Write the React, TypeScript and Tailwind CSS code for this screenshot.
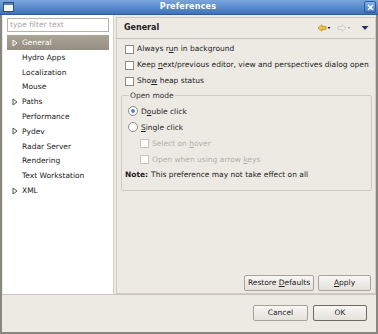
import React from "react";

const font = { fontFamily: '"DejaVu Sans", "Liberation Sans", sans-serif' };

function Tri({ color = "#555" }: { color?: string }) {
  return (
    <svg width="6" height="8" viewBox="0 0 6 8">
      <path d="M1 1 L5 4 L1 7 Z" fill="none" stroke={color} strokeWidth="1" />
    </svg>
  );
}

function Check({ disabled = false }: { disabled?: boolean }) {
  return (
    <span
      className={
        "inline-block w-[9px] h-[9px] border bg-white shrink-0 " +
        (disabled ? "border-[#c9c5bd] bg-[#f4f2ee]" : "border-[#8d8a83]")
      }
    />
  );
}

function Radio({ on = false }: { on?: boolean }) {
  return (
    <span className="relative inline-block w-[10px] h-[10px] rounded-full border border-[#8d8a83] bg-white shrink-0">
      {on && (
        <span className="absolute left-[2px] top-[2px] w-[4px] h-[4px] rounded-full bg-[#5b86c4]" />
      )}
    </span>
  );
}

function Btn({
  children,
  w,
  def = false,
}: {
  children: React.ReactNode;
  w: string;
  def?: boolean;
}) {
  return (
    <div
      className={
        "h-[16px] flex items-center justify-center rounded-[2px] bg-gradient-to-b from-[#f8f7f5] to-[#e4e1db] text-[#222] " +
        (def ? "border border-[#6f6b64] " : "border border-[#a7a39b] ") +
        w
      }
    >
      {children}
    </div>
  );
}

export default function App() {
  const items: [string, boolean][] = [
    ["Hydro Apps", false],
    ["Localization", false],
    ["Mouse", false],
    ["Paths", true],
    ["Performance", false],
    ["Pydev", true],
    ["Radar Server", false],
    ["Rendering", false],
    ["Text Workstation", false],
    ["XML", true],
  ];
  return (
    <div
      className="w-[378px] h-[334px] bg-[#edeae4] text-[7.5px] text-[#222] flex flex-col overflow-hidden"
      style={font}
    >
      {/* title bar */}
      <div className="h-[15px] shrink-0 bg-gradient-to-b from-[#7aa6de] to-[#3e72ba] border-b border-[#2d5a99] flex items-center px-[2px] relative">
        <svg width="11" height="10" viewBox="0 0 11 10" className="ml-[1px]">
          <rect x="0.5" y="0.5" width="10" height="9" fill="#f4f4f4" stroke="#2f4f7a" />
          <rect x="1" y="1" width="9" height="2" fill="#5a7fb3" />
        </svg>
        <div className="flex-1 text-center text-white font-bold text-[8px] tracking-[0.2px] pr-[2px]">
          Preferences
        </div>
        <div className="w-[12px] h-[12px] rounded-[2px] bg-gradient-to-b from-[#8db4e8] to-[#3f74bd] border border-[#2c5a9a] flex items-center justify-center">
          <svg width="7" height="7" viewBox="0 0 7 7">
            <path d="M1 1 L6 6 M6 1 L1 6" stroke="white" strokeWidth="1.6" />
          </svg>
        </div>
      </div>

      <div className="flex-1 flex border-l-2 border-r-2 border-b-2 border-[#8a8780] flex-col">
        <div className="flex h-[280px] border-b border-[#c9c5bd]">
          {/* left */}
          <div className="w-[111px] ml-[1px] bg-white flex flex-col pt-[3px] border-r border-[#d4d0c8]">
            <div className="mx-[4px] h-[14px] border border-[#b6b2aa] flex items-center px-[2px] text-[#a9a69f]">
              type filter text
            </div>
            <div className="mt-[3px] mx-[4px] h-[15px] bg-gradient-to-b from-[#aaa597] to-[#938e80] flex items-center text-white">
              <span className="w-[15px] flex justify-center">
                <Tri color="#fff" />
              </span>
              General
            </div>
            {items.map(([n, t]) => (
              <div key={n} className="mx-[4px] h-[14.8px] flex items-center">
                <span className="w-[15px] flex justify-center">{t && <Tri />}</span>
                {n}
              </div>
            ))}
          </div>
          {/* right */}
          <div className="flex-1 ml-[2px] mt-[2px] border border-[#d0ccc4] flex flex-col">
            <div className="h-[21px] flex items-center pl-[7px] pr-[4px] border-b border-[#c6c2ba]">
              <span className="font-bold text-[8px] flex-1">General</span>
              <svg width="14" height="8" viewBox="0 0 14 8">
                <path d="M1 4 L5 0.8 L5 2.6 L9 2.6 L9 5.4 L5 5.4 L5 7.2 Z" fill="#f2c84b" stroke="#b98a1a" strokeWidth="0.8" />
                <path d="M10.5 3 L13.5 3 L12 5 Z" fill="#222" />
              </svg>
              <svg width="14" height="8" viewBox="0 0 14 8" className="ml-[6px]">
                <path d="M9 4 L5 0.8 L5 2.6 L1 2.6 L1 5.4 L5 5.4 L5 7.2 Z" fill="#f0efec" stroke="#c4c1bb" strokeWidth="0.8" />
                <path d="M10.5 3 L13.5 3 L12 5 Z" fill="#aaa" />
              </svg>
              <svg width="8" height="6" viewBox="0 0 8 6" className="ml-[10px] mr-[2px]">
                <path d="M0.5 1 L7.5 1 L4 5 Z" fill="#2b2f6b" />
              </svg>
            </div>
            <div className="flex flex-col pl-[8px] pr-[3px] pt-[2px]">
              <div className="h-[16px] flex items-center gap-[3px]">
                <Check />
                <span>Always r<u>u</u>n in background</span>
              </div>
              <div className="h-[16px] flex items-center gap-[3px]">
                <Check />
                <span>Keep <u>n</u>ext/previous editor, view and perspectives dialog open</span>
              </div>
              <div className="h-[16px] flex items-center gap-[3px]">
                <Check />
                <span>Sho<u>w</u> heap status</span>
              </div>
              <fieldset className="mt-[1px] mr-[0px] -ml-[4px] border border-[#cfcbc3] rounded-[2px] px-[6px] pb-[9px]">
                <legend className="ml-[1px] px-[1px] text-[#333]">Open mode</legend>
                <div className="h-[16px] flex items-center gap-[3px] mt-[2px]">
                  <Radio on />
                  <span>D<u>o</u>uble click</span>
                </div>
                <div className="h-[16px] flex items-center gap-[3px]">
                  <Radio />
                  <span><u>S</u>ingle click</span>
                </div>
                <div className="h-[16px] flex items-center gap-[3px] pl-[12px] text-[#b2afa8]">
                  <Check disabled />
                  <span>Select on <u>h</u>over</span>
                </div>
                <div className="h-[16px] flex items-center gap-[3px] pl-[12px] text-[#b2afa8]">
                  <Check disabled />
                  <span>Open when using arrow <u>k</u>eys</span>
                </div>
                <div className="h-[14px] flex items-center -ml-[3px]">
                  <span className="font-bold mr-[3px]">Note:</span>
                  This preference may not take effect on all
                </div>
              </fieldset>
            </div>
            <div className="flex-1" />
            <div className="flex justify-end gap-[4px] pr-[4px] pb-[2px]">
              <Btn w="w-[70px]">
                <span>Restore <u>D</u>efaults</span>
              </Btn>
              <Btn w="w-[53px]">
                <span><u>A</u>pply</span>
              </Btn>
            </div>
          </div>
        </div>
        <div className="flex-1 flex justify-end items-start pt-[10px] pr-[9px] gap-[5px]">
          <Btn w="w-[55px]">Cancel</Btn>
          <Btn w="w-[54px]" def>
            OK
          </Btn>
        </div>
      </div>
    </div>
  );
}
